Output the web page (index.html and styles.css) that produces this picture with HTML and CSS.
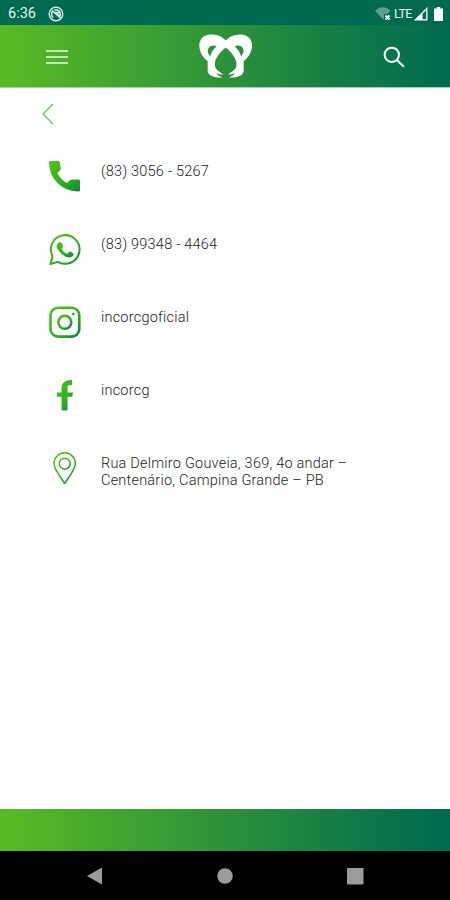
FILE: index.html
```html
<!DOCTYPE html>
<html lang="pt-BR">
<head>
  <meta charset="UTF-8" />
  <meta name="viewport" content="width=device-width, initial-scale=1.0" />
  <title>Contato</title>
  <link rel="stylesheet" href="styles.css">
</head>
<body>

  <div class="app">
    <!-- Status bar -->
    <div class="status-bar">
      <span class="clock">6:36</span>
      <svg class="status-app" viewBox="0 0 16 16">
        <circle cx="8" cy="8" r="6.8" fill="none" stroke="#e8f3ef" stroke-width="1.3"/>
        <path d="M5 11.500A4.300 4.300 0 0 1 5 5M6.500 4a4.300 4.300 0 0 1 5 6.500" fill="none" stroke="#e8f3ef" stroke-width="1.500"/>
        <path d="M4 4.500 12.500 12M6.500 6.500h3.500v3" fill="none" stroke="#e8f3ef" stroke-width="1.500"/>
      </svg>
      <div class="status-icons">
        <svg class="wifi" viewBox="0 0 16 14">
          <path d="M0 3.600C4.500-.9 11.500-.9 15.500 3.600L12.500 7H9v4.200L8 12.500z" fill="#5d9f8f"/>
          <path d="m10.500 8.500 4 4m0-4-4 4" stroke="#fff" stroke-width="1.800"/>
        </svg>
        <span class="lte">LTE</span>
        <svg class="signal" viewBox="0 0 14 14">
          <path d="M1.500 12.800 12.800 1.500v11.300z" fill="none" stroke="#fff" stroke-width="1.300"/>
          <path d="M1 13 8.500 5.500V13z" fill="#fff"/>
        </svg>
        <svg class="battery" viewBox="0 0 9 14">
          <path d="M2.700 0h3.600v1.500H9V14H0V1.500h2.700z" fill="#fff"/>
        </svg>
      </div>
    </div>

    <!-- Header -->
    <header class="header">
      <button class="menu-btn" aria-label="Menu"><span></span><span></span><span></span></button>
      <svg class="logo" viewBox="57 44 159 131">
        <path fill="#fff" fill-rule="evenodd" d="M137 63C126 50 109 44 91 45 69 46 57 61 58 80c1 18 11 34 25 45v27C83 167 100 175 128 174 118 171 112 166 108 159 116 164 122 166 129 165 124 159 111 154 106 143 100 129 110 106 137 84 164 106 174 129 168 143 163 154 150 159 145 165 152 166 158 164 166 159 162 166 156 171 146 174 174 175 191 167 191 152V125c14-11 24-27 25-45 1-19-11-34-33-35-18-1-35 5-46 18zM110 80c-9 8-17 18-19 31-7-7-10-17-6-24 4-8 15-11 25-7zM164 80c9 8 17 18 19 31 7-7 10-17 6-24-4-8-15-11-25-7z"/>
      </svg>
      <button class="search-btn" aria-label="Buscar">
        <svg viewBox="0 0 24 24">
          <circle cx="9.600" cy="9.600" r="7.800"/>
          <path d="m15.200 15.200 7.500 7.500"/>
        </svg>
      </button>
    </header>

    <!-- Contact list -->
    <main class="content">
      <svg class="back" viewBox="0 0 14 22"><path d="M12 1 2 11l10 10"/></svg>

      <svg class="defs" width="0" height="0">
        <defs>
          <linearGradient id="green" x1="0" y1="0" x2="1" y2="1">
            <stop offset="0" stop-color="#4fc414"/>
            <stop offset="0.6" stop-color="#2db022"/>
            <stop offset="1" stop-color="#0c8638"/>
          </linearGradient>
        </defs>
      </svg>

      <ul class="contacts">
        <li>
          <svg viewBox="0 0 32 32">
            <path fill="url(#green)" d="M1.500 1h7.800q1.200 0 1.400 1.300.2 3 1 5.400.4 1.200-.5 2.200L8.500 13.300q3.500 6.600 9.200 9.700l3.400-2.800q1-.7 2.200-.7h6.400q1.300.2 1.300 1.500v9q0 1.500-1.500 1.500Q17 31.500 8.500 23 0 14.500 0 2.500 0 1 1.500 1z"/>
          </svg>
          <span>(83) 3056 - 5267</span>
        </li>
        <li>
          <svg viewBox="0 0 32 32">
            <path fill="none" stroke="url(#green)" stroke-width="2" d="M1.500 31 3.500 23A14.300 14.300 0 1 1 9 28.800z"/>
            <path fill="url(#green)" d="M10.500 9.200h1.700l2 4q.2.600-1.600 2.700 1.900 3.400 5.600 5l1.900-2.200q.5-.5 1.200-.1l3.300 1.800q.2 3.400-3.900 4-4.200.4-8.700-4.100-5.100-5-4.400-8.100.8-2.700 2.900-3z"/>
          </svg>
          <span>(83) 99348 - 4464</span>
        </li>
        <li>
          <svg viewBox="0 0 32 32">
            <g fill="none" stroke="url(#green)" stroke-width="2.600">
              <rect x="1.500" y="1.800" width="28.800" height="28.800" rx="7.500"/>
              <circle cx="15.800" cy="16.200" r="6.500"/>
            </g>
            <circle cx="24.300" cy="8" r="1.300" fill="#1f9d2b"/>
          </svg>
          <span>incorcgoficial</span>
        </li>
        <li>
          <svg viewBox="0 0 32 32">
            <path fill="url(#green)" d="M12.500 31.500V17.800H8v-4.300h4.500V9.300q0-8.500 10.500-8.300v5h-2.300q-2.200 0-2.200 2.300v5.200H24l-.8 4.300h-4.700v13.700z"/>
          </svg>
          <span>incorcg</span>
        </li>
        <li>
          <svg viewBox="0 0 32 32">
            <g fill="none" stroke="url(#green)" stroke-width="1.500">
              <path d="M15.700 31.500C11.700 25 5 17.500 5 11.500a10.700 10.700 0 0 1 21.400 0C26.400 17.500 19.700 25 15.700 31.500z"/>
              <circle cx="15.700" cy="11.700" r="5.500"/>
            </g>
          </svg>
          <span>Rua Delmiro Gouveia, 369, 4o andar –<br>Centenário, Campina Grande – PB</span>
        </li>
      </ul>
    </main>

    <footer class="footer"></footer>

    <!-- Android navigation -->
    <nav class="nav-bar">
      <svg viewBox="0 0 18 18"><path d="M1 9 16 .500v17z"/></svg>
      <svg viewBox="0 0 18 18"><circle cx="9" cy="9" r="7.800"/></svg>
      <svg viewBox="0 0 18 18"><rect x="1" y="1" width="16.500" height="16.500" rx="1"/></svg>
    </nav>
  </div>

</body>
</html>
```

FILE: styles.css
```css
* {
  box-sizing: border-box;
}

body {
  margin: 0;
  font-family: Roboto, "Noto Sans", sans-serif;
  background-color: #fff;
  color: #222;
}

.app {
  display: flex;
  flex-direction: column;
  height: 900px;
}

/* Status bar */
.status-bar {
  display: flex;
  align-items: center;
  height: 25px;
  padding: 2px 7px 0 8px;
  background-color: #006a50;
  color: #e8f3ef;
}

.clock {
  width: 40px;
  font-size: 14.5px;
}

.status-app {
  width: 16px;
  height: 16px;
}

.status-icons {
  display: flex;
  align-items: center;
  margin-left: auto;
}

.wifi {
  width: 16px;
  height: 14px;
  margin-right: 3px;
}

.lte {
  width: 20px;
  font-size: 12.5px;
  letter-spacing: -0.6px;
}

.signal {
  width: 14px;
  height: 14px;
  margin-right: 6px;
}

.battery {
  width: 9px;
  height: 14px;
}

/* Header */
.header,
.footer {
  background: linear-gradient(to right, #58bb24, #379c35 38%, #137b46 77%, #00694f);
}

.header {
  display: flex;
  align-items: center;
  justify-content: space-between;
  height: 63px;
  padding: 0 45px 0 46px;
  border-bottom: 1px solid #a9cdb0;
}

.header button {
  padding: 1px 0 0;
  border: none;
  background: none;
  cursor: pointer;
}

.menu-btn {
  display: flex;
  flex-direction: column;
  gap: 4px;
  width: 22px;
}

.menu-btn span {
  height: 2px;
  background-color: #c4e6b4;
}

.logo {
  width: 53px;
  height: 44px;
}

.search-btn svg {
  display: block;
  width: 22px;
  height: 22px;
  fill: none;
  stroke: #fff;
  stroke-width: 2.2;
}

/* Content */
.content {
  flex: 1;
  padding: 15px 41px 0;
}

.back {
  display: block;
  width: 14px;
  height: 22px;
  fill: none;
  stroke: #62bd58;
  stroke-width: 1.2;
}

.defs {
  position: absolute;
}

.contacts {
  margin: 35px 0 0;
  padding: 0 0 0 8px;
  list-style: none;
}

.contacts li {
  display: flex;
  height: 73px;
  font-size: 14.5px;
  font-weight: 300;
  line-height: 17px;
  letter-spacing: 0.22px;
}

.contacts svg {
  flex: none;
  width: 32px;
  height: 32px;
  margin-right: 20px;
}

.contacts span {
  padding-top: 3px;
  white-space: nowrap;
}

/* Footer */
.footer {
  height: 42px;
}

.nav-bar {
  display: flex;
  justify-content: space-between;
  height: 49px;
  padding: 16px 86px 0;
  background-color: #000;
}

.nav-bar svg {
  width: 18px;
  height: 18px;
  fill: #9b9b9b;
}
```
